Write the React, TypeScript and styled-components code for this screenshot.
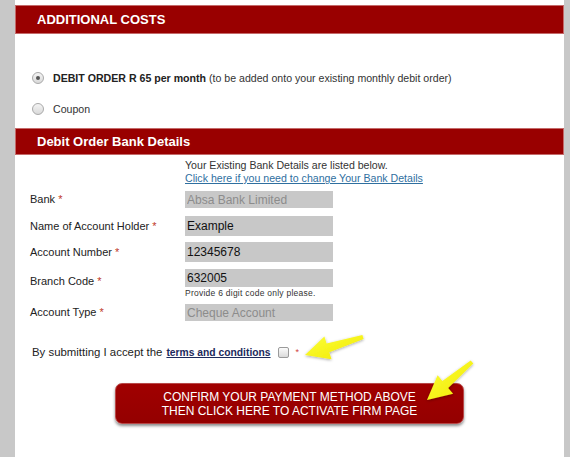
import React from "react";
import styled, { createGlobalStyle } from "styled-components";

const Global = createGlobalStyle`
  html, body { margin: 0; padding: 0; }
  body {
    background: #c8c8c8;
    font-family: "Liberation Sans", Arial, sans-serif;
    color: #222;
  }
`;

const Page = styled.div`
  position: relative;
  padding: 0 6px 0 15px;
  height: 457px;
  overflow: hidden;
`;

const Panel = styled.div`
  background: #fff;
  min-height: 457px;
  display: flex;
  flex-direction: column;
`;

const SectionHeader = styled.div<{ $h: number; $mt?: number }>`
  box-sizing: border-box;
  height: ${(p) => p.$h}px;
  margin-top: ${(p) => p.$mt ?? 0}px;
  background: #990000;
  border: 1px solid #c46a6a;
  color: #fff;
  font-weight: bold;
  font-size: 13px;
  display: flex;
  align-items: center;
  padding-left: 21px;
`;

const RadioList = styled.div`
  display: flex;
  flex-direction: column;
  gap: 17px;
  padding: 37px 0 12px 17px;
`;

const RadioRow = styled.label`
  display: flex;
  align-items: center;
  gap: 9px;
  height: 14px;
  font-size: 10.6px;
  color: #333;
`;

const RadioDot = styled.span<{ $checked?: boolean }>`
  box-sizing: border-box;
  width: 12px;
  height: 12px;
  border-radius: 50%;
  border: 1px solid #a9a9a9;
  background: linear-gradient(#f4f4f4, #d9d9d9);
  display: flex;
  align-items: center;
  justify-content: center;
  &::after {
    content: "";
    display: ${(p) => (p.$checked ? "block" : "none")};
    width: 4px;
    height: 4px;
    border-radius: 50%;
    background: #555;
  }
`;

const Strong = styled.b`
  color: #222;
`;

const Info = styled.div`
  padding: 4px 0 0 170px;
  font-size: 10.6px;
  line-height: 13px;
  color: #333;
`;

const InfoLink = styled.a`
  color: #2f6f9f;
  text-decoration: underline;
  display: block;
`;

const Form = styled.div`
  display: flex;
  flex-direction: column;
  padding-left: 15px;
`;

const Row = styled.div<{ $mt: number; $start?: boolean }>`
  display: grid;
  grid-template-columns: 155px 148px;
  align-items: ${(p) => (p.$start ? "start" : "center")};
  margin-top: ${(p) => p.$mt}px;
`;

const Label = styled.div<{ $top?: number }>`
  font-size: 11px;
  line-height: 13px;
  color: #222;
  margin-top: ${(p) => p.$top ?? 0}px;
`;

const Req = styled.span`
  color: #c0392b;
`;

const Input = styled.input<{ $h: number; $muted?: boolean }>`
  box-sizing: border-box;
  display: block;
  width: 148px;
  height: ${(p) => p.$h}px;
  border: 0;
  outline: 0;
  margin: 0;
  padding: 0 2px;
  background: #c8c8c8;
  font-family: "Liberation Sans", Arial, sans-serif;
  font-size: 12px;
  color: ${(p) => (p.$muted ? "#8c8c8c" : "#111")};
`;

const Hint = styled.div`
  font-size: 8.5px;
  letter-spacing: 0.25px;
  line-height: 13px;
  color: #333;
`;

const Terms = styled.div`
  display: flex;
  align-items: center;
  margin: 24px 0 0 17px;
  height: 14px;
  font-size: 11.4px;
  color: #222;
`;

const TermsLink = styled.a`
  margin-left: 4px;
  font-weight: bold;
  font-size: 10.3px;
  color: #1c2a5c;
  text-decoration: underline;
`;

const Check = styled.span`
  box-sizing: border-box;
  width: 11px;
  height: 11px;
  margin-left: 7px;
  border: 1px solid #9a9a9a;
  border-radius: 2px;
  background: linear-gradient(#fbfbfb, #dadada);
`;

const Star = styled.span`
  margin-left: 7px;
  color: #d04040;
  font-size: 9px;
`;

const ButtonWrap = styled.div`
  display: flex;
  justify-content: center;
  margin-top: 24px;
`;

const ActivateButton = styled.button`
  box-sizing: border-box;
  width: 349px;
  height: 41px;
  border: 1px solid #b84848;
  border-radius: 7px;
  background: linear-gradient(#a00000, #940000);
  box-shadow: 0 2px 3px rgba(0, 0, 0, 0.45);
  color: #fff;
  font-family: "Liberation Sans", Arial, sans-serif;
  font-size: 12px;
  line-height: 14px;
  text-transform: uppercase;
  padding: 0;
  cursor: pointer;
`;

const Overlay = styled.svg`
  position: absolute;
  left: 0;
  top: 0;
  pointer-events: none;
`;

type Pt = [number, number];

function arrow(tail: Pt, tip: Pt, tailW: number, shaftW: number, headW: number, headL: number): string {
  const dx = tip[0] - tail[0];
  const dy = tip[1] - tail[1];
  const len = Math.hypot(dx, dy);
  const ux = dx / len;
  const uy = dy / len;
  const px = -uy;
  const py = ux;
  const bx = tip[0] - ux * headL;
  const by = tip[1] - uy * headL;
  const pts: Pt[] = [
    [tail[0] + (px * tailW) / 2, tail[1] + (py * tailW) / 2],
    [bx + (px * shaftW) / 2, by + (py * shaftW) / 2],
    [bx + (px * headW) / 2, by + (py * headW) / 2],
    tip,
    [bx - (px * headW) / 2, by - (py * headW) / 2],
    [bx - (px * shaftW) / 2, by - (py * shaftW) / 2],
    [tail[0] - (px * tailW) / 2, tail[1] - (py * tailW) / 2],
  ];
  return pts.map((p) => `${p[0].toFixed(1)},${p[1].toFixed(1)}`).join(" ");
}

export default function App() {
  const a1 = arrow([363, 337], [305, 355], 4, 9, 24, 24);
  const a2 = arrow([472, 362], [427, 400], 4, 9, 24, 24);
  return (
    <>
      <Global />
      <Page>
        <Panel>
          <SectionHeader $h={29} $mt={5}>ADDITIONAL COSTS</SectionHeader>
          <RadioList>
            <RadioRow>
              <RadioDot $checked />
              <span>
                <Strong>DEBIT ORDER R 65 per month</Strong> (to be added onto your existing monthly debit order)
              </span>
            </RadioRow>
            <RadioRow>
              <RadioDot />
              <span>Coupon</span>
            </RadioRow>
          </RadioList>
          <SectionHeader $h={27}>Debit Order Bank Details</SectionHeader>
          <Info>
            Your Existing Bank Details are listed below.
            <InfoLink href="#">Click here if you need to change Your Bank Details</InfoLink>
          </Info>
          <Form>
            <Row $mt={6}>
              <Label>
                Bank <Req>*</Req>
              </Label>
              <Input $h={17} $muted readOnly value="Absa Bank Limited" />
            </Row>
            <Row $mt={8}>
              <Label>
                Name of Account Holder <Req>*</Req>
              </Label>
              <Input $h={20} readOnly value="Example" />
            </Row>
            <Row $mt={6}>
              <Label>
                Account Number <Req>*</Req>
              </Label>
              <Input $h={20} readOnly value="12345678" />
            </Row>
            <Row $mt={7} $start>
              <Label $top={6}>
                Branch Code <Req>*</Req>
              </Label>
              <div>
                <Input $h={18} readOnly value="632005" />
                <Hint>Provide 6 digit code only please.</Hint>
              </div>
            </Row>
            <Row $mt={4}>
              <Label>
                Account Type <Req>*</Req>
              </Label>
              <Input $h={17} $muted readOnly value="Cheque Account" />
            </Row>
          </Form>
          <Terms>
            By submitting I accept the
            <TermsLink href="#">terms and conditions</TermsLink>
            <Check />
            <Star>*</Star>
          </Terms>
          <ButtonWrap>
            <ActivateButton>
              Confirm your payment method above
              <br />
              then click here to activate firm page
            </ActivateButton>
          </ButtonWrap>
        </Panel>
        <Overlay width="570" height="457" viewBox="0 0 570 457">
          <defs>
            <filter id="glow" x="-20%" y="-20%" width="140%" height="140%">
              <feGaussianBlur in="SourceAlpha" stdDeviation="1.5" />
              <feOffset dx="0" dy="1" result="b" />
              <feComponentTransfer>
                <feFuncA type="linear" slope="0.35" />
              </feComponentTransfer>
              <feMerge>
                <feMergeNode />
                <feMergeNode in="SourceGraphic" />
              </feMerge>
            </filter>
            <linearGradient id="yel" x1="0" y1="0" x2="1" y2="1">
              <stop offset="0" stopColor="#fbff3a" />
              <stop offset="1" stopColor="#f2e800" />
            </linearGradient>
          </defs>
          <polygon points={a1} fill="url(#yel)" filter="url(#glow)" strokeLinejoin="round" />
          <polygon points={a2} fill="url(#yel)" filter="url(#glow)" strokeLinejoin="round" />
        </Overlay>
      </Page>
    </>
  );
}
